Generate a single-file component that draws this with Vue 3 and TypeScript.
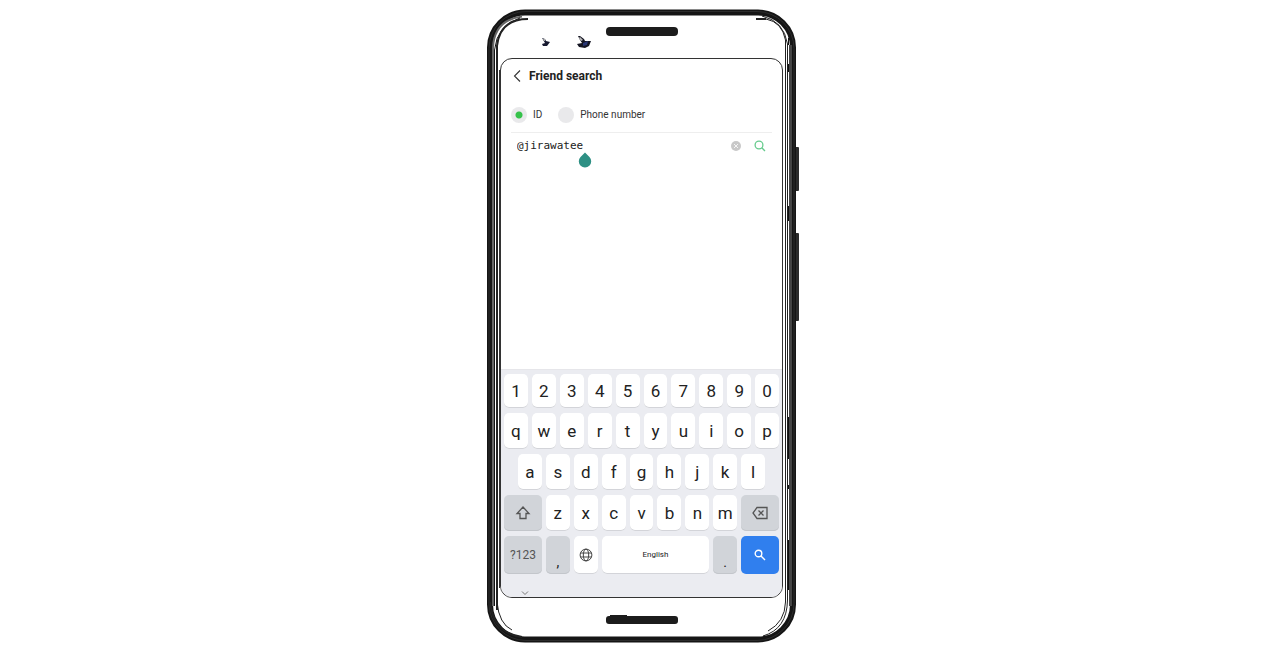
<script setup lang="ts">
import { ref } from 'vue'

const mode = ref<'id' | 'phone'>('id')
const query = ref('@jirawatee')
const digits: string[] = [...'1234567890']
const letters: string[][] = [[...'qwertyuiop'], [...'asdfghjkl'], [...'zxcvbnm']]

function type(key: string): void {
  query.value += key
}
function erase(): void {
  query.value = query.value.slice(0, -1)
}
</script>

<template>
  <main class="page">
    <div class="phone">
      <svg class="frame" viewBox="487 9 312 634" aria-hidden="true">
        <rect x="794" y="147" width="5" height="44" rx="1" fill="#2b2b2b" />
        <rect x="794" y="233" width="5" height="88" rx="1" fill="#2b2b2b" />
        <rect x="490" y="12.5" width="303" height="627" rx="35" fill="#fff" stroke="#151515" stroke-width="6" />
        <rect x="489" y="11.5" width="305" height="629" rx="37" fill="none" stroke="#2c2c2c" stroke-width="1" />
        <g fill="none">
          <path d="M493 606V48Q494 20 522 16.5" stroke="#666" stroke-width="2" />
          <path d="M494.500 606V50Q497 25 520 18" stroke="#111" />
          <path d="M497 610V46Q500 19 528 19" stroke="#222" stroke-width="2" />
          <path d="M497 602Q499 624 512 630" stroke="#222" />
          <path d="M499.500 588V70" stroke="#333" />
          <path d="M490 602Q493 633 522 637" stroke="#222" stroke-width="2" />
          <path d="M756 19H766" stroke="#222" stroke-width="2" />
          <path d="M766 19Q782 22 785.500 40V602Q785 622 768 631" stroke="#222" />
          <path d="M762 16Q784 21 787.500 44V600Q787 629 763 636" stroke="#222" />
          <path d="M790.500 45V606" stroke="#444" stroke-width="3" />
          <path d="M788.500 38V45M788.500 64V72M788.500 206V221M788.500 417V459M788.500 485V489M788.500 540V590" stroke="#111" />
        </g>
        <rect x="606" y="27" width="72" height="9" rx="4" fill="#1c1c1c" />
        <rect x="606" y="616" width="72" height="8" rx="3" fill="#1c1c1c" />
        <path d="M610 616V615H627V616Z" fill="#1c1c1c" />
        <path d="M542 38L545 39L546 41L550 42L547 46H543L542 44L545 43Z" fill="#171a30" />
        <path d="M543 39H545V41H544Z" fill="#aaa" />
        <path d="M578 36H580L584 39L585 41H591L589 46L585 48L579 47L577 44L582 43L580 40Z" fill="#141522" />
        <path d="M580 37L583 40L581 41L579 38Z" fill="#bbb" />
        <path d="M583 43L588 41L587 45L583 46Z" fill="#293673" />
      </svg>

      <section class="screen">
        <header class="bar">
          <button class="back" aria-label="Back">
            <svg viewBox="0 0 8 14" width="8" height="14"><path d="M7 1.500L1.500 7L7 12.500" fill="none" stroke="#333" stroke-width="1.100" /></svg>
          </button>
          <h1>Friend search</h1>
        </header>

        <div class="modes">
          <label><input v-model="mode" type="radio" name="mode" value="id" /><span>ID</span></label>
          <label><input v-model="mode" type="radio" name="mode" value="phone" /><span>Phone number</span></label>
        </div>

        <form class="search" @submit.prevent>
          <div class="field">
            <input v-model="query" type="text" aria-label="Friend ID" spellcheck="false" />
            <svg class="handle" viewBox="0 0 14 16" width="14" height="16" aria-hidden="true">
              <path d="M7 0.500L11.500 5A6.200 6.200 0 1 1 2.500 5Z" fill="#2e9084" />
            </svg>
          </div>
          <button type="button" aria-label="Clear" @click="query = ''">
            <svg viewBox="0 0 12 12" width="12" height="12"><circle cx="6" cy="6" r="5" fill="#c8c8c8" /><path d="M4 4L8 8M8 4L4 8" stroke="#f4f4f4" /></svg>
          </button>
          <button type="submit" aria-label="Search">
            <svg viewBox="0 0 12 12" width="12" height="12" fill="none" stroke="#66cb8d" stroke-width="1.300"><circle cx="5" cy="5" r="3.900" /><path d="M7.800 7.800L11 11" /></svg>
          </button>
        </form>

        <div class="keyboard">
          <div class="row digits">
            <button v-for="k in digits" :key="k" class="key" @click="type(k)">{{ k }}</button>
          </div>
          <div class="row">
            <button v-for="k in letters[0]" :key="k" class="key" @click="type(k)">{{ k }}</button>
          </div>
          <div class="row inset">
            <button v-for="k in letters[1]" :key="k" class="key" @click="type(k)">{{ k }}</button>
          </div>
          <div class="row">
            <button class="key wide grey" aria-label="Shift">
              <svg viewBox="0 0 16 16" width="16" height="16"><path d="M8 2L14 8.500H11V13.500H5V8.500H2Z" fill="none" stroke="#555" stroke-width="1.300" /></svg>
            </button>
            <button v-for="k in letters[2]" :key="k" class="key" @click="type(k)">{{ k }}</button>
            <button class="key wide grey" aria-label="Backspace" @click="erase">
              <svg viewBox="0 0 18 14" width="18" height="14" fill="none" stroke="#555" stroke-width="1.300"><path d="M6 1.500H16V12.500H6L2 7Z" /><path d="M7.500 4.500L12.500 9.500M12.500 4.500L7.500 9.500" /></svg>
            </button>
          </div>
          <div class="row bottom">
            <button class="key wide grey symbols">?123</button>
            <button class="key grey low" @click="type(',')">,</button>
            <button class="key" aria-label="Change language">
              <svg viewBox="0 0 14 14" width="14" height="14" fill="none" stroke="#444"><circle cx="7" cy="7" r="5.900" /><ellipse cx="7" cy="7" rx="2.700" ry="5.900" /><path d="M1.500 5H12.500M1.500 9H12.500" /></svg>
            </button>
            <button class="key space" @click="type(' ')">English</button>
            <button class="key grey low" @click="type('.')">.</button>
            <button class="key wide go" aria-label="Go">
              <svg viewBox="0 0 12 12" width="12" height="12" fill="none" stroke="#fff" stroke-width="1.400"><circle cx="4.500" cy="4.500" r="3.300" /><path d="M7 7L11 11" /></svg>
            </button>
          </div>
          <button class="hide" aria-label="Hide keyboard">
            <svg viewBox="0 0 8 6" width="8" height="6"><path d="M1 1.500L4 4.500L7 1.500" fill="none" stroke="#777" /></svg>
          </button>
        </div>
      </section>
    </div>
  </main>
</template>

<style>
body {
  margin: 0;
  background: #fff;
}
</style>

<style scoped>
* {
  box-sizing: border-box;
}
.page {
  display: flex;
  justify-content: center;
  padding: 9px 0 10px 6px;
  font-family: Roboto, "Liberation Sans", sans-serif;
  color: #222;
}
button {
  display: flex;
  align-items: center;
  justify-content: center;
  padding: 0;
  border: 0;
  background: none;
  font: inherit;
  color: inherit;
}
.phone {
  position: relative;
  width: 312px;
  padding: 49px 16px 45px 13px;
}
.frame {
  position: absolute;
  inset: 0;
  width: 100%;
  height: 100%;
}
.screen {
  position: relative;
  display: flex;
  flex-direction: column;
  overflow: hidden;
  min-height: 540px;
  border: 1px solid #333;
  border-radius: 12px;
  background: #fff;
}
.bar {
  display: flex;
  align-items: center;
  gap: 8px;
  height: 34px;
  padding-left: 12px;
}
h1 {
  margin: 0;
  font-size: 12px;
  line-height: 16px;
  font-weight: 700;
}
.modes {
  display: flex;
  align-items: center;
  gap: 16px;
  height: 40px;
  margin: 0 10px;
  padding-top: 5px;
  border-bottom: 1px solid #eee;
  font-size: 10px;
  line-height: 16px;
  color: #333;
}
.modes label {
  display: flex;
  align-items: center;
  gap: 6px;
}
.modes input {
  appearance: none;
  width: 16px;
  height: 16px;
  margin: 0;
  border-radius: 50%;
  background: #e9e9eb;
}
.modes input:checked {
  background: radial-gradient(circle, #36c24b 3px, #e9e9eb 4px);
}
.search {
  display: flex;
  align-items: center;
  gap: 12px;
  height: 26px;
  padding: 0 16px;
}
.field {
  position: relative;
  flex: 1;
  display: flex;
}
.field input {
  width: 100%;
  padding: 0;
  border: 0;
  outline: 0;
  background: none;
  font-family: "DejaVu Sans Mono", monospace;
  font-size: 11px;
  line-height: 16px;
  color: #222;
}
.handle {
  position: absolute;
  left: 61px;
  top: 14px;
}
.keyboard {
  display: flex;
  flex-direction: column;
  gap: 5px;
  margin-top: auto;
  padding: 4px 3px 0 3px;
  border-top: 1px solid #e6e6ea;
  background: #ebecf1;
}
.row {
  display: flex;
  gap: 4px;
  height: 36px;
}
.digits {
  height: 34px;
}
.bottom {
  height: 38px;
}
.inset {
  padding: 0 14px;
}
.key {
  flex: 24 1 0;
  min-width: 0;
  border-radius: 5px;
  background: #fff;
  box-shadow: inset 0 -1px #d3d4d9;
  font-size: 17px;
  line-height: 20px;
}
.wide {
  flex-grow: 38;
}
.space {
  flex-grow: 108;
  font-size: 8px;
}
.grey {
  background: #d1d4d9;
  box-shadow: inset 0 -1px #c3c6cb;
}
.symbols {
  font-size: 12px;
  color: #555;
}
.low {
  align-items: flex-end;
  padding-bottom: 2px;
  font-size: 14px;
}
.go {
  background: #307fee;
  box-shadow: none;
}
.hide {
  width: 12px;
  height: 18px;
  margin-left: 15px;
  padding-top: 10px;
}
</style>
